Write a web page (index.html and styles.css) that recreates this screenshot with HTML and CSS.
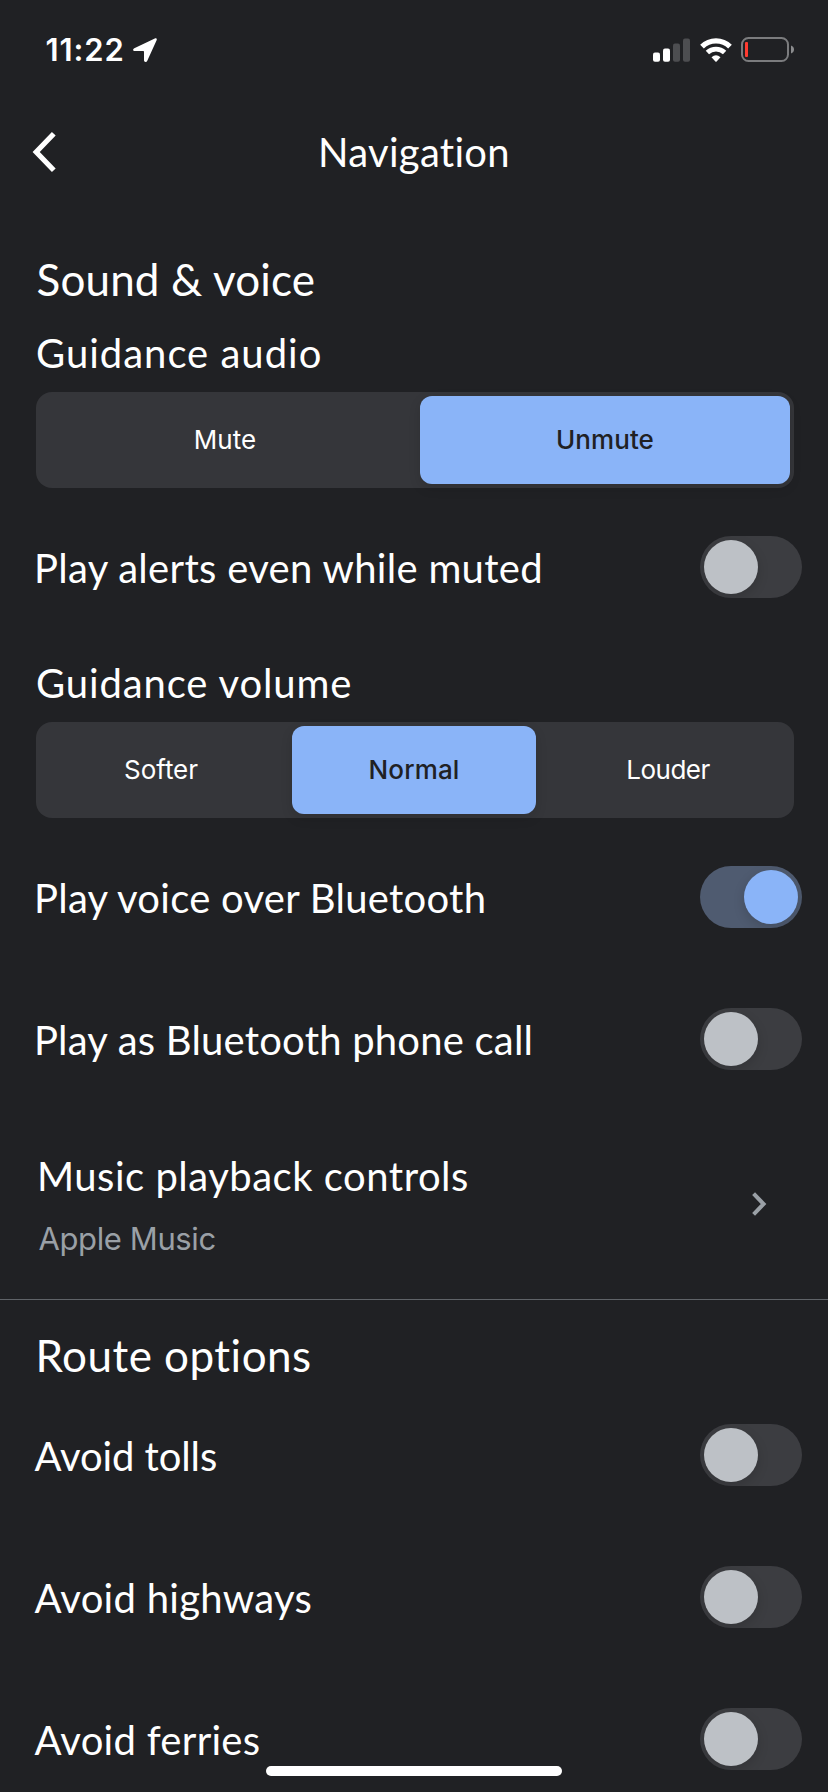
FILE: index.html
```
<!DOCTYPE html>
<html lang="en">
<head>
<meta charset="utf-8">
<title>Navigation</title>
<link rel="stylesheet" href="styles.css">
</head>
<body>
<div class="screen">
  <div class="status">
    <span class="time">11:22</span>
    <svg class="location" width="24" height="24" viewBox="0 0 24 24"><path d="M1.3 10.2 21.8.4C23.3-.2 24.2.8 23.6 2.3L14.3 22.7C13.4 24.6 11 24.2 11 22.2V13.7Q11 13 10.3 13H1.8C-.2 13-.5 11.1 1.3 10.2z" fill="#fff"/></svg>
    <div class="indicators">
      <svg width="37" height="24" viewBox="0 0 37 24"><rect y="14.5" width="7" height="9.3" rx="2" fill="#fff"/><rect x="10" y="10.5" width="7" height="13.3" rx="2" fill="#fff"/><rect x="20" y="5.5" width="7" height="18.3" rx="2" fill="#4d4e51"/><rect x="30" y=".5" width="7" height="23.3" rx="2" fill="#4d4e51"/></svg>
      <svg width="32" height="24" viewBox="0 0 32 24"><g fill="none" stroke="#fff"><path d="M2 8.6a19.8 19.8 0 0 1 28 0" stroke-width="5.2"/><path d="M7.4 14.6a12.5 12.5 0 0 1 17.2 0" stroke-width="4.8"/></g><path d="M11.5 19.3Q16 15.4 20.5 19.3L16.6 23.4Q16 24 15.4 23.4z" fill="#fff"/></svg>
      <svg width="54" height="26" viewBox="0 0 54 26"><rect x="1" y="1" width="46" height="23" rx="6.5" fill="none" stroke="#7b7c7e" stroke-width="2"/><rect x="4" y="5" width="3" height="15" rx="1" fill="#ff3b30"/><path d="M50 8.5q3 1.2 3 4t-3 4z" fill="#8b8c8e"/></svg>
    </div>
  </div>

  <header class="header">
    <svg class="back" width="26" height="42" viewBox="0 0 26 42"><path d="M22.8 2.8 5.2 21l17.6 18.2" fill="none" stroke="#fff" stroke-width="5.2"/></svg>
    <h1 class="title">Navigation</h1>
  </header>

  <main>
    <h2 class="section section-sound">Sound &amp; voice</h2>
    <h3 class="group group-audio">Guidance audio</h3>
    <div class="segments segments-two">
      <div class="segment">Mute</div>
      <div class="segment selected">Unmute</div>
    </div>
    <div class="row"><span class="label alerts">Play alerts even while muted</span><span class="switch"></span></div>
    <h3 class="group group-volume">Guidance volume</h3>
    <div class="segments segments-three">
      <div class="segment softer">Softer</div>
      <div class="segment selected normal">Normal</div>
      <div class="segment louder">Louder</div>
    </div>
    <div class="row"><span class="label voice">Play voice over Bluetooth</span><span class="switch on"></span></div>
    <div class="row row-flush"><span class="label call">Play as Bluetooth phone call</span><span class="switch"></span></div>
    <div class="link">
      <div>
        <div class="link-title">Music playback controls</div>
        <div class="link-sub">Apple Music</div>
      </div>
      <svg width="16" height="26" viewBox="0 0 16 26"><path d="M2.6 2.6 12.6 13l-10 10.4" fill="none" stroke="#9aa0a6" stroke-width="4"/></svg>
    </div>
    <h2 class="section section-route">Route options</h2>
    <div class="row avoid"><span class="label tolls">Avoid tolls</span><span class="switch"></span></div>
    <div class="row avoid"><span class="label highways">Avoid highways</span><span class="switch"></span></div>
    <div class="row avoid"><span class="label ferries">Avoid ferries</span><span class="switch"></span></div>
  </main>
  <div class="home-indicator"></div>
</div>
</body>
</html>
```
FILE: styles.css
```
* { box-sizing: border-box; }

body {
  margin: 0;
  background: #202124;
}

.screen {
  position: relative;
  width: 828px;
  height: 1792px;
  overflow: hidden;
  background: #202124;
  color: #fff;
  font-family: Lato, "Open Sans", sans-serif;
  font-size: 40px;
}

h1, h2, h3 {
  margin: 0;
  font-weight: 400;
}

svg { display: block; flex: none; }

/* Status bar */
.status {
  display: flex;
  align-items: center;
  height: 100px;
  padding: 0 33px 0 45.5px;
}

.time {
  width: 87.5px;
  font: 600 31px/40px Inter, sans-serif;
  letter-spacing: 0.9px;
}

.indicators {
  display: flex;
  align-items: center;
  gap: 9.5px;
  margin-left: auto;
}

/* Header */
.header {
  display: grid;
  grid-template-columns: 30px 1fr 30px;
  align-items: center;
  height: 101px;
  padding: 0 30px;
}

.back { margin: 3px 0 0 1px; }

.title {
  padding-top: 2px;
  font-size: 40px;
  line-height: 48px;
  letter-spacing: 0.29px;
  text-align: center;
}

/* Headings */
.section {
  height: 54px;
  font-size: 44px;
  line-height: 56px;
}

.section-sound {
  margin: 50px 0 8px;
  padding-left: 36.5px;
  letter-spacing: 0.15px;
}

.section-route {
  margin: 27px 0 3px;
  padding-left: 35.5px;
  letter-spacing: 0.47px;
}

.group {
  height: 79px;
  padding-left: 36px;
  font-size: 40px;
  line-height: 81px;
}

.group-audio { letter-spacing: 1px; }

.group-volume {
  margin-top: 5px;
  letter-spacing: 0.88px;
}

/* Segmented controls */
.segments {
  display: grid;
  gap: 10px;
  width: 758px;
  height: 96px;
  margin-left: 36px;
  padding: 4px;
  border-radius: 16px;
  background: #35363a;
}

.segments-two { grid-template-columns: 1fr 1fr; }
.segments-three { grid-template-columns: 242px 244px 1fr; }

.segment {
  border-radius: 12px;
  font: 400 26px/88px Inter, sans-serif;
  letter-spacing: 0.06px;
  text-align: center;
}

.segment.selected {
  background: #8ab4f8;
  box-shadow: 0 4px 12px rgba(0, 0, 0, 0.13);
  color: #202124;
  font-weight: 500;
}

.segment.softer { letter-spacing: -0.06px; }
.segment.normal { letter-spacing: 0.14px; }
.segment.louder { letter-spacing: -0.49px; }

/* Switch rows */
.row {
  display: flex;
  align-items: center;
  justify-content: space-between;
  height: 142px;
  margin-top: 8px;
  padding: 0 26px 0 34px;
}

.row-flush { margin-top: 0; }

.row.avoid {
  margin-top: 0;
  padding-left: 34.5px;
}

.label {
  padding-top: 1px;
  line-height: 48px;
}

.alerts { letter-spacing: 0.31px; }
.voice { letter-spacing: 0.27px; }
.call { letter-spacing: 0.21px; }
.tolls { letter-spacing: -0.08px; }
.highways, .ferries { letter-spacing: 0.29px; }

.switch {
  display: flex;
  width: 102px;
  height: 62px;
  padding: 4px;
  border-radius: 31px;
  background: #3c3d41;
  overflow: hidden;
}

.switch::before {
  content: "";
  width: 54px;
  height: 54px;
  border-radius: 50%;
  background: #bdc1c6;
  box-shadow: 0 4px 12px rgba(0, 0, 0, 0.15);
}

.switch.on {
  justify-content: flex-end;
  background: #4f5b70;
}

.switch.on::before { background: #8ab4f8; }

/* Link row */
.link {
  display: flex;
  align-items: center;
  justify-content: space-between;
  height: 190px;
  padding: 4px 61px 0 37px;
  border-bottom: 1px solid #5f6368;
}

.link-title {
  line-height: 64px;
  letter-spacing: 0.51px;
}

.link-sub {
  padding-left: 1.5px;
  color: #9aa0a6;
  font: 400 31px/62px Inter, sans-serif;
  letter-spacing: -0.39px;
}

.link svg { margin-top: -5px; }

/* Floats over the scrolled list */
.home-indicator {
  position: absolute;
  left: 266px;
  bottom: 16px;
  width: 296px;
  height: 10px;
  border-radius: 5px;
  background: #fff;
}
```
